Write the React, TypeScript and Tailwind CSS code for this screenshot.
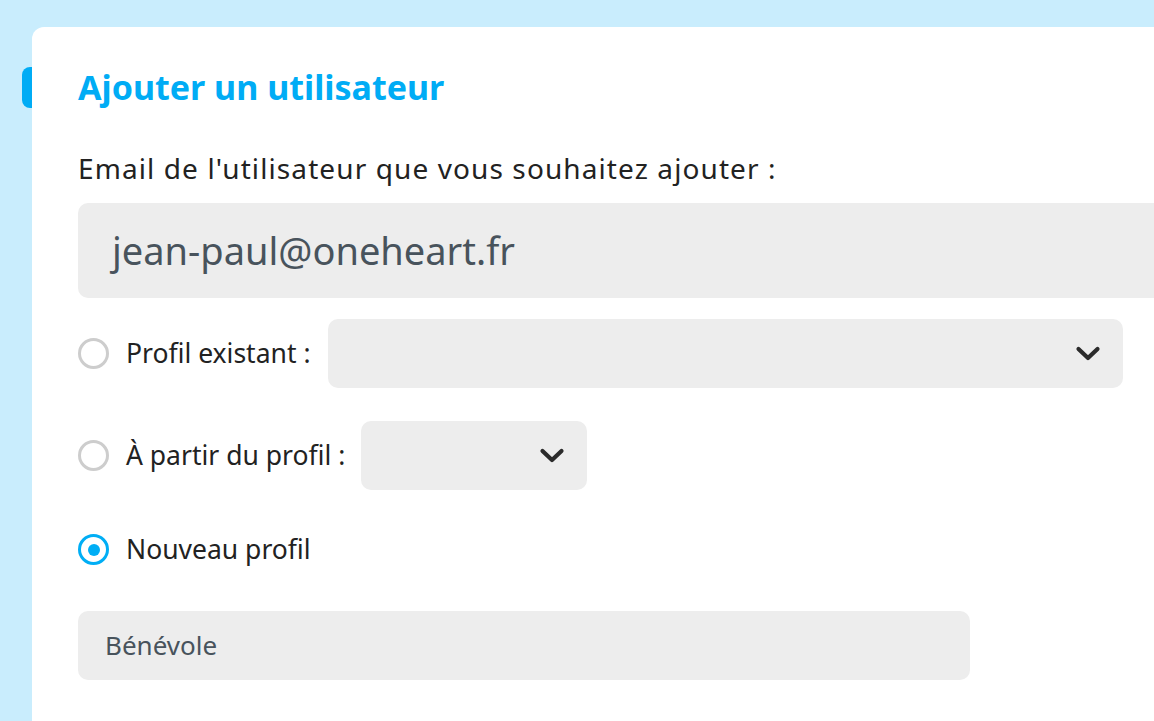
import React from "react";

const Chevron = () => (
  <svg width="26" height="18" viewBox="0 0 26 18">
    <path d="M3.5 4 L13 13 L22.5 4" fill="none" stroke="#2b2b2b" strokeWidth="4.2" strokeLinecap="round" strokeLinejoin="round" />
  </svg>
);

const Radio = ({ checked }: { checked?: boolean }) =>
  checked ? (
    <span className="flex h-[31px] w-[31px] shrink-0 items-center justify-center rounded-full border-[3.5px] border-[#00aef5]">
      <span className="h-[12px] w-[12px] rounded-full bg-[#00aef5]" />
    </span>
  ) : (
    <span className="h-[31px] w-[31px] shrink-0 rounded-full border-[3px] border-[#cdcdcd]" />
  );

export default function App() {
  return (
    <div
      className="h-[721px] w-[1154px] overflow-hidden bg-[#c9edfd] pt-[27px] pl-[22px]"
      style={{ fontFamily: "'Noto Sans', sans-serif" }}
    >
      <div className="flex h-full">
        <div className="mt-[40px] h-[41px] w-[10px] shrink-0 rounded-l-[8px] bg-[#00acf5]" />
        <div className="flex-1 rounded-tl-[12px] bg-white pl-[46px] pt-[38px]">
          <h1 className="text-[34px] font-bold leading-[44px] text-[#00acf5]">Ajouter un utilisateur</h1>
          <p className="mt-[41px] text-[28px] leading-[36px] tracking-[1.1px] text-[#222]">
            Email de l'utilisateur que vous souhaitez ajouter :
          </p>
          <div className="mt-[17px] flex h-[95px] items-center rounded-l-[10px] bg-[#ededed] pl-[34px]">
            <span className="text-[38px] text-[#48535c]">jean-paul@oneheart.fr</span>
          </div>
          <div className="mt-[21px] flex items-center">
            <Radio />
            <span className="ml-[17px] text-[26.5px] text-[#222]">Profil existant :</span>
            <div className="ml-[17px] flex h-[69px] w-[795px] items-center justify-end rounded-[10px] bg-[#ededed] pr-[22px]">
              <Chevron />
            </div>
          </div>
          <div className="mt-[33px] flex items-center">
            <Radio />
            <span className="ml-[17px] text-[26.5px] text-[#222]">À partir du profil :</span>
            <div className="ml-[16px] flex h-[69px] w-[226px] items-center justify-end rounded-[10px] bg-[#ededed] pr-[22px]">
              <Chevron />
            </div>
          </div>
          <div className="mt-[40px] flex items-center">
            <Radio checked />
            <span className="ml-[17px] text-[26.5px] text-[#222]">Nouveau profil</span>
          </div>
          <div className="mt-[41px] flex h-[69px] w-[892px] items-center rounded-[10px] bg-[#ededed] pl-[27px]">
            <span className="text-[26px] text-[#48535c]">Bénévole</span>
          </div>
        </div>
      </div>
    </div>
  );
}
